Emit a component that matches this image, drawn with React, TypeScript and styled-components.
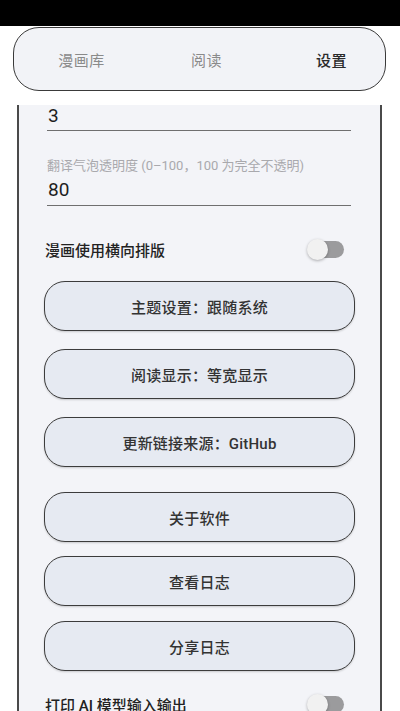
import styled, { createGlobalStyle } from 'styled-components';

const GlobalStyle = createGlobalStyle`
    html, body {
        margin: 0;
        padding: 0;
        background: #ffffff;
    }
    body {
        font-family: Roboto, "Noto Sans CJK SC", "Noto Sans", sans-serif;
    }
`;

const Screen = styled.div`
    width: 400px;
    height: 711px;
    display: flex;
    flex-direction: column;
    overflow: hidden;
    background: #ffffff;
`;

const StatusBar = styled.div`
    height: 26px;
    flex: none;
    background: #000000;
`;

const NavPill = styled.nav`
    flex: none;
    margin: 1px 14px 0 13px;
    height: 62px;
    border: 1.5px solid #3a3a3a;
    border-radius: 26px;
    background: #f2f3f7;
    display: flex;
    align-items: center;
    padding-left: 5px;
`;

const NavItem = styled.div<{ $active?: boolean }>`
    flex: none;
    width: 125px;
    text-align: center;
    font-size: 15px;
    font-weight: ${(p) => (p.$active ? 500 : 400)};
    color: ${(p) => (p.$active ? '#2a2a2a' : '#8a8a8a')};
    letter-spacing: 0.5px;
`;

const ScrollArea = styled.div`
    flex: 1;
    margin-top: 14px;
    overflow: hidden;
`;

const Card = styled.div`
    margin: 0 18px 0 17px;
    min-height: 100%;
    border-left: 2px solid #4a4a4a;
    border-right: 2px solid #4a4a4a;
    background: #f3f4f8;
    display: flex;
    flex-direction: column;
`;

const Field = styled.div<{ $top?: number }>`
    margin: ${(p) => p.$top ?? 0}px 29px 0 28px;
    border-bottom: 1px solid #6f6f6f;
    padding-bottom: 3px;
`;

const FieldLabel = styled.div`
    font-size: 13px;
    line-height: 16px;
    color: #a9a9ad;
    margin-bottom: 4px;
`;

const FieldValue = styled.div<{ $lh?: number }>`
    font-size: 19px;
    line-height: ${(p) => p.$lh ?? 24}px;
    color: #1e1e1e;
    padding-left: 1px;
`;

const SwitchRow = styled.div<{ $top: number }>`
    margin: ${(p) => p.$top}px 36px 0 26px;
    height: 36px;
    display: flex;
    align-items: center;
    justify-content: space-between;
`;

const SwitchLabel = styled.span`
    font-size: 15px;
    font-weight: 500;
    color: #222222;
`;

const Track = styled.div`
    position: relative;
    width: 34px;
    height: 17px;
    border-radius: 9px;
    background: #9b9b9d;
`;

const Thumb = styled.div`
    position: absolute;
    left: -3px;
    top: -2px;
    width: 21px;
    height: 21px;
    border-radius: 50%;
    background: #f1f1f1;
    box-shadow: 0 1px 3px rgba(0, 0, 0, 0.3);
`;

const PillButton = styled.button<{ $top: number }>`
    margin: ${(p) => p.$top}px 25px 0 25px;
    height: 50px;
    flex: none;
    border: 1.5px solid #3c3c3c;
    border-radius: 21px;
    background: #e6eaf2;
    box-shadow: 0 1px 2px rgba(0, 0, 0, 0.18);
    font-family: Roboto, "Noto Sans CJK SC", sans-serif;
    font-size: 15px;
    font-weight: 500;
    color: #333333;
    letter-spacing: 0.2px;
    padding: 0;
`;

const Switch = () => (
    <Track>
        <Thumb />
    </Track>
);

const buttons = [
    { label: '主题设置：跟随系统', top: 14 },
    { label: '阅读显示：等宽显示', top: 18 },
    { label: '更新链接来源：GitHub', top: 18 },
    { label: '关于软件', top: 25 },
    { label: '查看日志', top: 14 },
    { label: '分享日志', top: 15 },
];

const App = () => {
    return (
        <>
            <GlobalStyle />
            <Screen>
                <StatusBar />
                <NavPill>
                    <NavItem>漫画库</NavItem>
                    <NavItem>阅读</NavItem>
                    <NavItem $active>设置</NavItem>
                </NavPill>
                <ScrollArea>
                    <Card>
                        <Field>
                            <FieldValue $lh={22}>3</FieldValue>
                        </Field>
                        <Field $top={27}>
                            <FieldLabel>翻译气泡透明度 (0–100，100 为完全不透明)</FieldLabel>
                            <FieldValue>80</FieldValue>
                        </Field>
                        <SwitchRow $top={25}>
                            <SwitchLabel>漫画使用横向排版</SwitchLabel>
                            <Switch />
                        </SwitchRow>
                        {buttons.map((b) => (
                            <PillButton key={b.label} $top={b.top}>
                                {b.label}
                            </PillButton>
                        ))}
                        <SwitchRow $top={15}>
                            <SwitchLabel>打印 AI 模型输入输出</SwitchLabel>
                            <Switch />
                        </SwitchRow>
                    </Card>
                </ScrollArea>
            </Screen>
        </>
    );
};

export default App;
